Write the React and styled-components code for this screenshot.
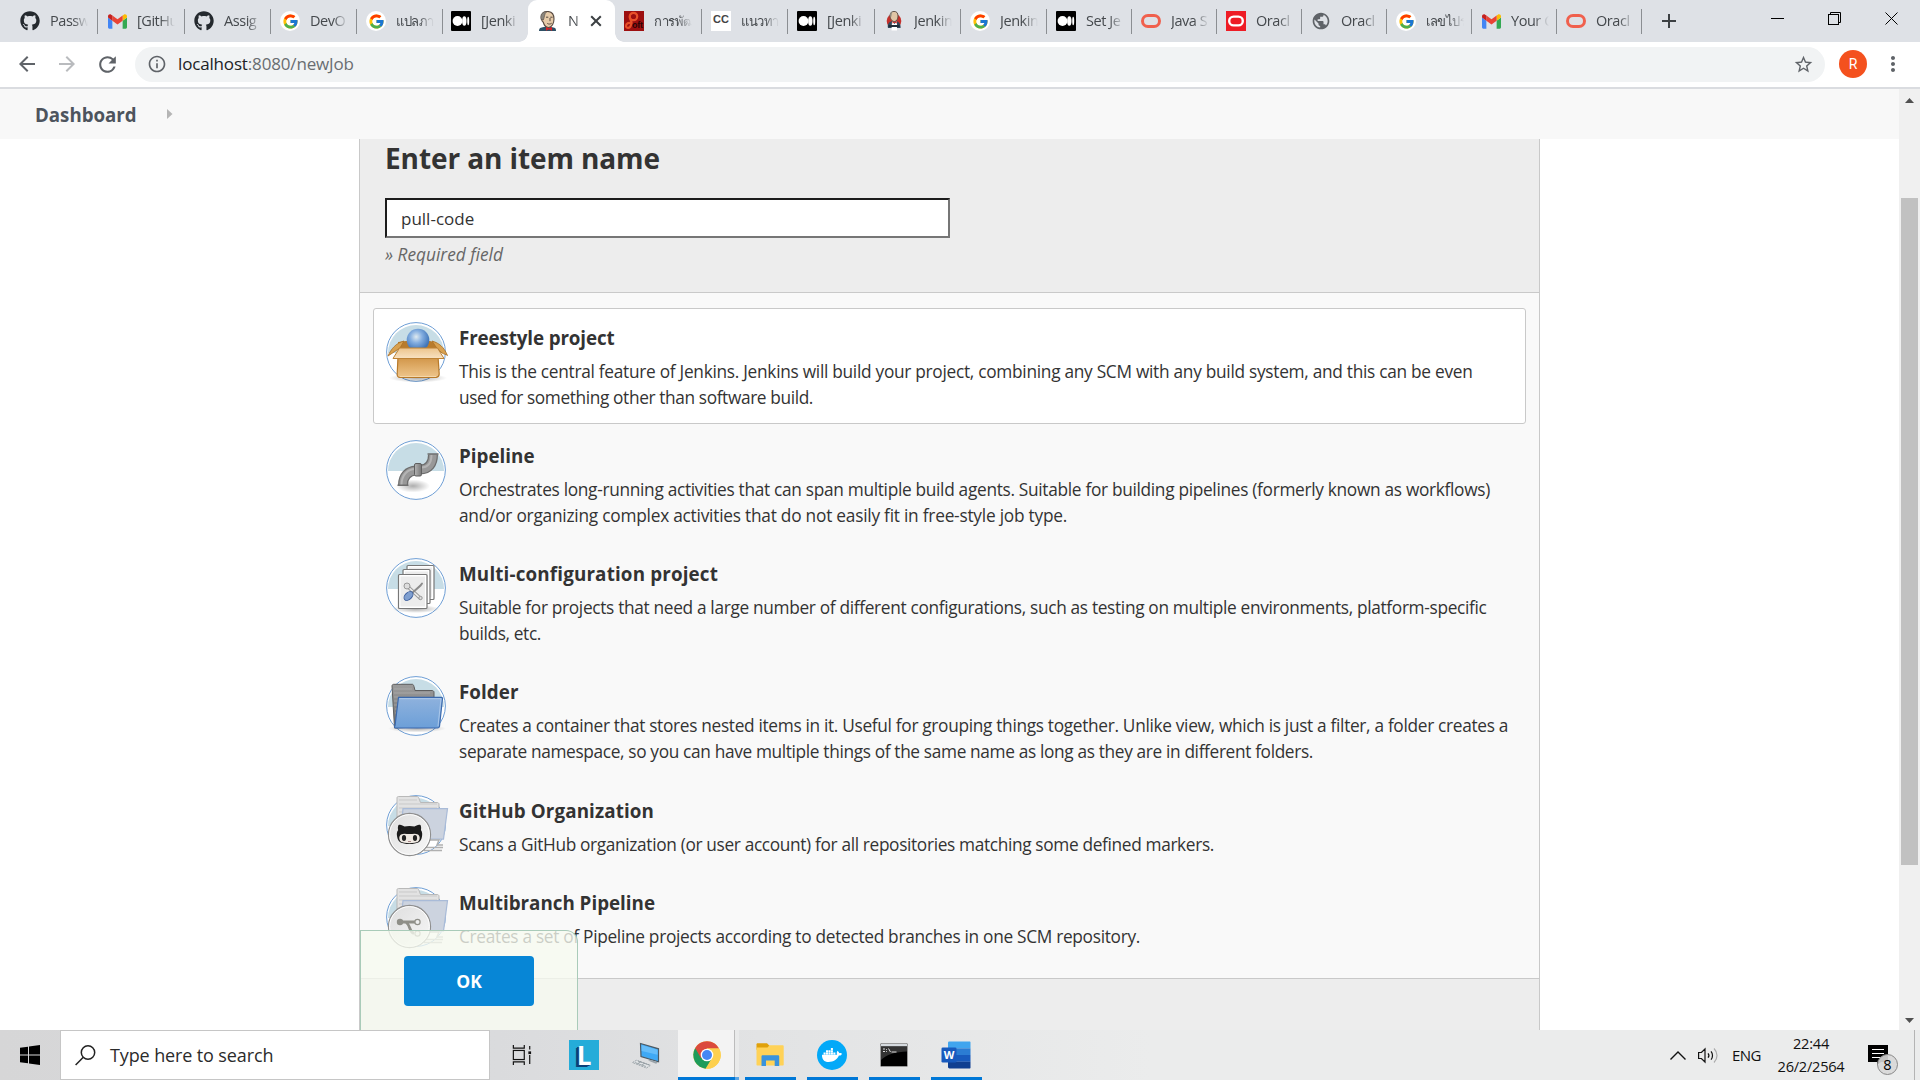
import React from 'react';
import styled, { createGlobalStyle, css } from 'styled-components';
import { FaGithub, FaDocker } from 'react-icons/fa';
import { FcGoogle } from 'react-icons/fc';
import {
  MdArrowBack, MdArrowForward, MdRefresh, MdInfoOutline, MdStarBorder, MdMoreVert, MdPublic,
} from 'react-icons/md';

const FONT = '"Open Sans", "Noto Sans", "Liberation Sans", sans-serif';

const GlobalStyle = createGlobalStyle`
  * { box-sizing: border-box; }
  html, body { margin: 0; height: 100%; overflow: hidden; }
  body { font-family: ${FONT}; color: #333; background: #fff; }
  svg { display: block; flex: none; overflow: visible; }
`;

/* Tracks text so that it fills a given measure. */
const ctx = document.createElement('canvas').getContext('2d');
function tracking(text, font, width) {
  ctx.font = `${font} ${FONT}`;
  return (width - ctx.measureText(text).width) / text.length;
}

const Screen = styled.div`
  width: 1920px;
  height: 1080px;
  display: flex;
  flex-direction: column;
  overflow: hidden;
`;

/* ---------- tab strip ---------- */
const TabStrip = styled.div`
  height: 42px;
  flex: none;
  display: flex;
  background: #dee1e6;
`;
const Tab = styled.div`
  width: ${(p) => p.$w}px;
  height: 42px;
  flex: none;
  display: flex;
  align-items: center;
  padding-left: ${(p) => p.$pad || 9}px;
  gap: 10px;
  background: linear-gradient(#8b8e92, #8b8e92) right 0 top 9px / 1.5px 25px no-repeat;
  ${(p) => p.$plain && css`background: none;`}
`;
const ActiveTab = styled.div`
  position: relative;
  width: 87px;
  height: 42px;
  flex: none;
  display: flex;
  align-items: center;
  gap: 10px;
  padding-left: 10px;
  background: #fff;
  border-radius: 9px 9px 0 0;
  &::before, &::after {
    content: '';
    position: absolute;
    bottom: 0;
    width: 9px;
    height: 9px;
  }
  &::before { left: -9px; background: radial-gradient(circle at 0 0, transparent 8.5px, #fff 9px); }
  &::after { right: -9px; background: radial-gradient(circle at 100% 0, transparent 8.5px, #fff 9px); }
`;
const TabText = styled.span`
  width: ${(p) => p.$w || 38}px;
  flex: none;
  overflow: hidden;
  white-space: nowrap;
  font-size: ${(p) => (p.$thai ? 13 : 14.5)}px;
  line-height: 24px;
  letter-spacing: -0.45px;
  color: #45494d;
  mask-image: linear-gradient(90deg, #000 60%, transparent 100%);
`;
const Fav = styled.span`
  width: 20px;
  height: 20px;
  flex: none;
  display: flex;
  align-items: center;
  justify-content: center;
  overflow: hidden;
  font: 700 11px/16px "Liberation Sans", Arial, sans-serif;
  color: #444;
  background: ${(p) => p.$bg || 'transparent'};
  border-radius: ${(p) => p.$r || 0};
`;
const FavText = styled.span`
  padding-bottom: 4px;
  line-height: 14px;
`;
const CloseBox = styled.span`
  display: flex;
  margin-left: -1px;
`;
const NewTab = styled.div`
  width: 54px;
  display: flex;
  align-items: center;
  justify-content: center;
`;
const WindowButtons = styled.div`
  margin-left: auto;
  height: 37px;
  display: flex;
`;
const WindowButton = styled.div`
  width: 57px;
  display: flex;
  align-items: center;
  justify-content: center;
`;

/* ---------- toolbar ---------- */
const Toolbar = styled.div`
  height: 47px;
  flex: none;
  display: flex;
  align-items: center;
  padding: 0 15px 1px;
  border-bottom: 2px solid #dadce0;
  background: #fff;
  color: #5f6368;
`;
const NavButton = styled.span`
  width: 40px;
  display: flex;
  color: ${(p) => (p.$off ? '#b9bbbe' : '#5f6368')};
`;
const Omnibox = styled.div`
  flex: 1;
  height: 35px;
  display: flex;
  align-items: center;
  padding: 0 11px 0 12px;
  border-radius: 18px;
  background: #f1f3f4;
`;
const Url = styled.span`
  margin: 0 auto 0 11px;
  font-size: 17px;
  line-height: 26px;
  letter-spacing: -0.16px;
  color: #696d71;
  b { font-weight: 400; color: #202124; }
`;
const Avatar = styled.span`
  width: 28px;
  height: 28px;
  margin: 0 14px;
  display: flex;
  align-items: center;
  justify-content: center;
  border-radius: 50%;
  background: #f4511e;
  color: #fff;
  font: 400 14px Roboto, sans-serif;
`;

/* ---------- page ---------- */
const Viewport = styled.div`
  height: 941px;
  flex: none;
  display: flex;
`;
const Page = styled.div`
  flex: 1;
  display: flex;
  flex-direction: column;
  overflow: hidden;
  background: #fff;
`;
const Breadcrumbs = styled.div`
  height: 50px;
  flex: none;
  display: flex;
  align-items: center;
  gap: 30px;
  padding-left: 35px;
  background: #f8f8f8;
  color: #4d545d;
  font-size: 18.7px;
  font-weight: 700;
`;
const Panel = styled.main`
  position: relative;
  width: 1181px;
  flex: 1;
  margin-left: 359px;
  display: flex;
  flex-direction: column;
  border: solid #c9c9c9;
  border-width: 0 1px;
  background: #ededed;
  overflow: hidden;
`;
const NameSection = styled.section`
  height: 154px;
  flex: none;
  padding-left: 25px;
  border-bottom: 1px solid #c9c9c9;
`;
const Heading = styled.h1`
  margin: 0 0 21px;
  font-size: 28px;
  line-height: 38px;
  letter-spacing: -0.1px;
  color: #333;
`;
const NameInput = styled.div`
  width: 565px;
  height: 40px;
  padding-left: 14px;
  border: 2px solid;
  border-color: #1c1c1c #767676 #767676 #1c1c1c;
  background: #fff;
  font-size: 17px;
  line-height: 37px;
  color: #333;
`;
const Hint = styled.p`
  margin: 4px 0 0;
  font-size: 17.3px;
  line-height: 26px;
  font-style: italic;
  letter-spacing: 0;
  color: #666;
`;
const ItemList = styled.section`
  flex: none;
  height: 686px;
  padding: 15px 13px 0;
  display: flex;
  flex-direction: column;
  gap: 2.15px;
  border-bottom: 1px solid #c9c9c9;
  background: #f9f9f9;
`;
const Item = styled.article`
  display: flex;
  gap: 13px;
  padding: 13px 12px;
  border: 1px solid ${(p) => (p.$selected ? '#c9c9c9' : 'transparent')};
  border-radius: 3px;
  background: ${(p) => (p.$selected ? '#fff' : 'transparent')};
`;
const ItemText = styled.div`
  padding-top: 3px;
  margin-bottom: -1px;
`;
const ItemTitle = styled.h2`
  margin: 0 0 8px;
  font-size: 18.8px;
  line-height: 26px;
  white-space: nowrap;
  color: #333;
  letter-spacing: ${(p) => p.$ls}px;
`;
const Line = styled.span`
  display: block;
  height: 26px;
  font-size: 17.3px;
  line-height: 26px;
  white-space: nowrap;
  letter-spacing: ${(p) => p.$ls}px;
`;
const Footer = styled.div`
  position: absolute;
  left: 0;
  bottom: 0;
  width: 218px;
  height: 100px;
  padding: 25px 0 0 43px;
  border: solid #a9cbb9;
  border-width: 1px 1px 0 1px;
  border-top-right-radius: 12px;
  background: rgba(246, 250, 240, 0.78);
`;
const OkButton = styled.div`
  width: 130px;
  height: 50px;
  display: flex;
  align-items: center;
  justify-content: center;
  border-radius: 4px;
  background: #0786d6;
  color: #fff;
  font-size: 17.5px;
  font-weight: 700;
`;
const Scrollbar = styled.div`
  width: 21px;
  flex: none;
  display: flex;
  flex-direction: column;
  align-items: center;
  padding: 9px 0 7px;
  background: #f0f0f0;
`;
const Thumb = styled.div`
  width: 17px;
  height: 667px;
  margin: 95px 0 auto;
  background: #c1c1c1;
`;

/* ---------- taskbar ---------- */
const Taskbar = styled.div`
  height: 50px;
  flex: none;
  display: flex;
  background: linear-gradient(90deg, #d6d6d7 0, #dadbdd 500px, #e2e3e4 760px, #ebecec 1150px);
  color: #111;
`;
const StartButton = styled.div`
  width: 60px;
  display: flex;
  align-items: center;
  justify-content: center;
`;
const SearchBox = styled.div`
  width: 430px;
  margin-right: 1px;
  display: flex;
  align-items: center;
  gap: 14px;
  padding-left: 14px;
  border: 1px solid #c6c6c6;
  background: #fff;
  font-size: 18px;
  letter-spacing: -0.12px;
  color: #2b2b2b;
`;
const TaskButton = styled.div`
  width: 62px;
  display: flex;
  align-items: center;
  justify-content: center;
  ${(p) => p.$open && css`background: linear-gradient(#0078d7, #0078d7) center bottom / 51px 3px no-repeat;`}
  ${(p) => p.$active && css`
    padding-right: 3px;
    background:
      linear-gradient(90deg, #0078d7 57px, #5aa5e4 57px) 1px bottom / 61px 3px no-repeat,
      linear-gradient(90deg, #f3f3f3 56px, #bcbcbc 56px 57px, #e9eaea 57px) 1px top / 61px 100% no-repeat;
  `}
`;
const LTile = styled.span`
  width: 30px;
  height: 30px;
  display: flex;
  align-items: center;
  justify-content: center;
  background: #25acd9;
  color: #fff;
  font: 700 26px/30px "Open Sans", sans-serif;
  text-shadow: -1px 1px 0 #0b3f78, -2px 1px 0 #0b3f78, -3px 2px 0 #0b3f78;
`;
const Tray = styled.div`
  margin-left: auto;
  display: flex;
  align-items: center;
  padding-right: 5px;
`;
const Speaker = styled.span`
  display: flex;
  margin-left: 12px;
`;
const Lang = styled.span`
  width: 30px;
  margin: 0 14px 0 13px;
  font-size: 15px;
  letter-spacing: -0.6px;
`;
const Clock = styled.div`
  width: 70px;
  text-align: center;
  line-height: 22.6px;
  font-size: 14.6px;
  letter-spacing: -0.25px;
`;
const Notifications = styled.div`
  position: relative;
  width: 46px;
  height: 50px;
  margin-left: 22px;
  padding-top: 15px;
`;
const Badge = styled.span`
  position: absolute;
  left: 9px;
  top: 24px;
  width: 21px;
  height: 21px;
  border: 1px solid #888;
  border-radius: 50%;
  background: rgba(216, 216, 216, 0.9);
  text-align: center;
  color: #000;
  font-size: 14.5px;
  line-height: 19px;
`;
const DesktopEdge = styled.div`
  width: 1px;
  height: 50px;
  background: #b4b4b4;
`;

/* ---------- favicons ---------- */
const Gmail = () => (
  <svg width="19" height="15" viewBox="0 0 24 18">
    <path d="M1.600 18H5.500V8L0 4v12.400C0 17.300.7 18 1.600 18z" fill="#4285f4" />
    <path d="M18.500 18h3.900c.9 0 1.600-.7 1.600-1.600V4l-5.500 4z" fill="#34a853" />
    <path d="M18.500 1.500V8L24 4V2.400C24 .4 21.700-.8 20 .4z" fill="#fbbc04" />
    <path d="M5.500 8V1.500L12 6.300l6.500-4.800V8L12 12.800z" fill="#ea4335" />
    <path d="M0 2.400V4l5.500 4V1.500L4 .4C2.300-.8 0 .4 0 2.400z" fill="#c5221f" />
  </svg>
);
const Medium = () => (
  <svg width="20" height="20" viewBox="0 0 20 20">
    <rect width="20" height="20" rx="1" fill="#000" />
    <circle cx="6.500" cy="10" r="4.900" fill="#fff" />
    <ellipse cx="13.300" cy="10" rx="2.200" ry="4.700" fill="#fff" />
    <ellipse cx="17.200" cy="10" rx="1" ry="4.200" fill="#fff" />
  </svg>
);
const Oracle = ({ c = '#f0604d', s = 3, w = 20 }) => (
  <svg width={w} height="14" viewBox="0 0 20 14">
    <rect x={s / 2} y={s / 2} width={20 - s} height={14 - s} rx={(14 - s) / 2} fill="none" stroke={c} strokeWidth={s} />
  </svg>
);
const Butler = () => (
  <svg width="20" height="20" viewBox="0 0 20 20">
    <path d="M1 20c0-3 1.500-3.500 5-4h7c4 .5 5 1 5 4z" fill="#2f5065" />
    <path d="M3.500 7C3 2.500 6 .5 9.500.5c4.500 0 6.500 3 6.500 7.500 0 4-2 8.500-5.500 8.500S6 14 5.200 11C4 11 3.700 9 3.500 7z" fill="#e6cba9" stroke="#56483f" strokeWidth="1.100" />
    <path d="M3 8.500C1.800 3 5 .3 9 .6 6 2.500 7 5.500 5.300 9z" fill="#8a867e" stroke="#56483f" strokeWidth=".6" />
    <path d="M8 6.200h2.300M12.300 6.200h2.300M12 7v3.200M9.300 12.500c1.700.9 3.300.6 4.400-.3" stroke="#56483f" strokeWidth="1" fill="none" />
    <path d="M8 16l3 1.300 3-1.300v3.800L11 18.300 8 19.800z" fill="#d81f26" />
  </svg>
);
const JenkinsLogo = () => (
  <svg width="18" height="20" viewBox="0 0 18 20">
    <circle cx="9" cy="10" r="7.300" fill="#c5302b" />
    <path d="M3 17c-1-4 1-6 4-7h4c3.500 1 5 4 4.500 7z" fill="#33475a" />
    <path d="M7 10l2.500 3 2.500-3v9.500H6.500z" fill="#fff" />
    <path d="M5 5C5 1.500 7 .4 9 .4c2.600 0 4 1.600 4 4.600S11.500 10.500 9.500 10.500 5.500 9 5 5z" fill="#e0c5a5" stroke="#56483f" strokeWidth=".9" />
    <path d="M4.700 5.200C4.600 2 6.500.6 8 .6 6.500 2 6.800 3.500 6.300 5.800z" fill="#8d887e" />
    <path d="M7.500 10.200l2 .9 2.300-.9v2.300l-2.300-.8-2 .8z" fill="#d33833" />
    <path d="M3.500 15h11" stroke="#222d38" strokeWidth="2" />
  </svg>
);
const Soft = () => (
  <svg width="20" height="20" viewBox="0 0 20 20">
    <rect width="20" height="20" fill="#9d0f10" />
    <circle cx="9.500" cy="5.500" r="3.700" fill="none" stroke="#e8502a" strokeWidth="2.200" />
    <path d="M6 4.500C4.500 9 9.500 10 7 14c-1 4-5 3.500-5 1s3-4 4.500-2.500" fill="none" stroke="#e8502a" strokeWidth="2.200" />
    <text x="8" y="17" fontSize="9" fontWeight="700" fontFamily="Liberation Sans" fill="#2a0505" textLength="11">oft</text>
  </svg>
);

/* ---------- item icons ---------- */
const Disc = () => (
  <>
    <circle cx="30" cy="30" r="29.300" fill="#fff" />
    <path d="M2 31a28 28 0 0 1 56 0z" fill="#c7dde6" />
    <circle cx="30" cy="30" r="29.400" fill="none" stroke="#6f9fd6" strokeWidth="1" />
  </>
);
const ItemSvg = ({ children }) => <svg width="60" height="60" viewBox="0 0 60 60">{children}</svg>;
const Gradients = () => (
  <svg width="0" height="0" viewBox="0 0 1 1" aria-hidden="true">
    <defs>
      <radialGradient id="ball" cx=".42" cy=".36" r=".6"><stop offset="0" stopColor="#dfeaf0" /><stop offset=".45" stopColor="#84aee0" /><stop offset="1" stopColor="#3f74b8" /></radialGradient>
      <linearGradient id="box" x1="0" y1="0" x2="0" y2="1"><stop offset="0" stopColor="#cf9243" /><stop offset="1" stopColor="#efc68c" /></linearGradient>
      <linearGradient id="flap" x1="0" y1="0" x2="0" y2="1"><stop offset="0" stopColor="#ecc48c" /><stop offset="1" stopColor="#f8e2c2" /></linearGradient>
      <linearGradient id="pipe" x1="0" y1="0" x2="1" y2="0"><stop offset="0" stopColor="#b5b5b5" /><stop offset="1" stopColor="#757575" /></linearGradient>
      <radialGradient id="shade"><stop offset="0" stopColor="#000" stopOpacity=".32" /><stop offset="1" stopColor="#000" stopOpacity="0" /></radialGradient>
      <linearGradient id="blue" x1="0" y1="0" x2="0" y2="1"><stop offset="0" stopColor="#8fb2dd" /><stop offset="1" stopColor="#6c9fd8" /></linearGradient>
      <linearGradient id="gray" x1="0" y1="0" x2="0" y2="1"><stop offset="0" stopColor="#9c9c9c" /><stop offset="1" stopColor="#6e6e6e" /></linearGradient>
      <linearGradient id="disc" x1="0" y1="0" x2="1" y2="1"><stop offset="0" stopColor="#dedede" /><stop offset="1" stopColor="#f7f7f7" /></linearGradient>
    </defs>
  </svg>
);
const FreestyleIcon = () => (
  <ItemSvg>
    <Disc />
    <ellipse cx="32" cy="56" rx="29" ry="4.500" fill="url(#shade)" />
    <path d="M12 20l8-1h24l7 2v8H12z" fill="#b87b2c" />
    <path d="M18 19l-4 7-12 8c3-7 8-13 16-15zM46 19c7 2 12 6 15.500 14.500-2-1.500-3-1-5.500-2.500l-6-6z" fill="#d9a14f" stroke="#a87027" strokeWidth=".8" />
    <circle cx="32" cy="18" r="11.300" fill="url(#ball)" />
    <path d="M12 34h40l1.200 18c0 2-1 3-3 3.500H14c-2 0-3-1.500-2.800-3.500z" fill="url(#box)" stroke="#b87a2a" strokeWidth="1.200" />
    <path d="M13.500 26h38l6.500 10.500H7z" fill="url(#flap)" stroke="#bd8235" strokeWidth="1" />
    <path d="M14 54.500h36" stroke="#f6dcb3" strokeWidth=".8" />
  </ItemSvg>
);
const PipelineIcon = () => (
  <ItemSvg>
    <Disc />
    <ellipse cx="27" cy="46" rx="17" ry="6.500" fill="url(#shade)" />
    <path d="M17 45c0-9 5-14 13-14.500M34 29.500c9 0 13-6 13-15" fill="none" stroke="#6d6d6d" strokeWidth="10" />
    <path d="M17 45c0-9 5-14 13-14.500M34 29.500c9 0 13-6 13-15" fill="none" stroke="#989898" strokeWidth="7.500" />
    <path d="M15.500 45c0-10 6-16 14-16M35 27.500c7 0 10.500-5 10.500-13" fill="none" stroke="#b4b4b4" strokeWidth="2" />
    <rect x="28.500" y="23.500" width="7" height="12.500" rx="1.500" fill="url(#pipe)" stroke="#5f5f5f" />
    <path d="M11.500 45.300h11M41.500 14h11" stroke="#6f6f6f" strokeWidth="1.500" />
  </ItemSvg>
);
const MultiIcon = () => (
  <ItemSvg>
    <Disc />
    <ellipse cx="30" cy="51" rx="24" ry="4" fill="url(#shade)" />
    {[[21, 7.5, 27, 34], [17, 11.5, 27, 34], [12.5, 16.5, 28.500, 34]].map(([x, y, w, h]) => (
      <g key={x}>
        <rect x={x} y={y} width={w} height={h} rx="1" fill="#fff" stroke="#777" strokeWidth="1.200" />
        <rect x={x + 2} y={y + 2} width={w - 4} height={h - 4} fill="#ececec" />
      </g>
    ))}
    <path d="M20 27l14 13" stroke="#9a9a9a" strokeWidth="3.600" strokeLinecap="round" />
    <path d="M20 27l14 13" stroke="#eee" strokeWidth="1.600" strokeLinecap="round" />
    <circle cx="21" cy="28" r="3" fill="#ddd" stroke="#999" />
    <circle cx="34.500" cy="40" r="1.700" fill="#ddd" stroke="#999" />
    <path d="M25 36l9.500-8.500 1.500-2" stroke="#8c8c8c" strokeWidth="2" strokeLinecap="round" />
    <ellipse cx="22.500" cy="38" rx="5.300" ry="3.400" transform="rotate(-45 22.500 38)" fill="#7f9fd0" stroke="#3d5f9e" />
  </ItemSvg>
);
const FolderIcon = () => (
  <ItemSvg>
    <Disc />
    <ellipse cx="31" cy="52.500" rx="29" ry="4" fill="url(#shade)" />
    <path d="M6 10c0-1 .7-1.700 1.700-1.700h18.500c1 0 1.300.7 1.800 2.200l1 4h17c1 0 2 .7 2 1.700V50l-38 2H8.500z" fill="url(#gray)" stroke="#5e5e5e" />
    <path d="M8 13h18M8 17h36M8 21h5M8 25h5M8 29h4M9 33h3M9 37h3" stroke="#c4c4c4" strokeWidth=".6" opacity=".7" />
    <path d="M12.500 21.300h43c.8 0 1 .4 1 1l-3 28c-.3 1.300-1 1.700-2 1.700H10c-1.500 0-2-.5-1-2.500z" fill="url(#blue)" stroke="#3a69ad" strokeWidth="1.200" />
    <path d="M13.500 22.700h41.500l-3 27.500" fill="none" stroke="#b6cfee" strokeWidth=".8" />
  </ItemSvg>
);
const PaleFolder = () => (
  <>
    <Disc />
    <path d="M11 3c0-1 .5-1.500 1.500-1.500H31c1 0 1.500.6 2 2l1.500 4H51c1 0 2 .6 2 1.600V42H11z" fill="#e2e2e2" stroke="#b9b9b9" />
    <path d="M13 5h18M13 9h38M13 13h38M13 17h38" stroke="#c9c9c9" strokeWidth="1" />
    <path d="M17 13.700h44.500l-4 30.500H14z" fill="#ccd3df" stroke="#a9bbd8" strokeWidth="1.200" />
    <path d="M43 45h10l-2 5h6M40 52.500h17M38 55.500h18" stroke="#b0b0b0" strokeWidth="1.500" fill="none" />
    <circle cx="23.500" cy="39.500" r="21" fill="url(#disc)" stroke="#8f8f8f" strokeWidth="1.300" />
    <circle cx="23.500" cy="39.500" r="19.900" fill="none" stroke="#fff" strokeWidth="1" />
  </>
);
const GithubOrgIcon = () => (
  <ItemSvg>
    <PaleFolder />
    <path d="M12.500 30c2-1 4.500.7 6 1.500 3-.7 7-.7 10 0 1.500-.8 4-2.500 6-1.500.9 2 .7 3.800.4 5 1.500 2 1.500 4 1 7-.8 5-4.500 7-12.400 7S12 47 11.200 42c-.6-3-.6-5 1-7-.4-1.200-.6-3 .3-5z" fill="#1b1b1b" />
    <path d="M15 39.500c2.500-1.500 5-.6 8.500-.6s6-.9 8.500.6c2.500 1.800 2 5.500 0 7.300C29.500 48.600 17.500 48.600 15 46.800c-2-1.800-2.500-5.500 0-7.300z" fill="#efe9e2" />
    <ellipse cx="18" cy="43" rx="2.100" ry="2.900" fill="#222" />
    <ellipse cx="29" cy="43" rx="2.100" ry="2.900" fill="#222" />
    <path d="M22 46.500h3" stroke="#a88" strokeWidth="1" />
  </ItemSvg>
);
const MultibranchIcon = () => (
  <ItemSvg>
    <PaleFolder />
    <path d="M14 35h15M19 35c5 1 4 9 8 11h1" stroke="#8f8f88" strokeWidth="2.800" fill="none" />
    <circle cx="14" cy="35" r="3.200" fill="#8f8f88" />
    <circle cx="31.500" cy="35" r="2.600" fill="#eee" stroke="#8f8f88" strokeWidth="1.200" />
    <circle cx="31.500" cy="46.500" r="2.600" fill="#eee" stroke="#8f8f88" strokeWidth="1.200" />
  </ItemSvg>
);

/* ---------- taskbar icons ---------- */
const Chrome = () => (
  <svg width="28" height="28" viewBox="0 0 48 48">
    <circle cx="24" cy="24" r="23.500" fill="#fdd04e" />
    <path d="M24 24L3.700 12.200A23.500 23.500 0 0 0 21.500 47.400L32 30z" fill="#1e9c5a" />
    <path d="M24 13h20.700A23.500 23.500 0 0 0 3.700 12.100L14 30z" fill="#db4a3c" />
    <path d="M24 13h20.700A23.500 23.500 0 0 1 22.500 47.500L33.500 29z" fill="#fdd04e" />
    <circle cx="24" cy="24" r="10.800" fill="#fff" />
    <circle cx="24" cy="24" r="8.600" fill="#4587f4" />
  </svg>
);
const Explorer = () => (
  <svg width="28" height="24" viewBox="0 0 28 24">
    <path d="M.5 1.500C.5.700 1 .3 1.800.3H11l2.500 2.500v4H.5z" fill="#e0a10a" />
    <path d="M.5 4.500h11l2-2.300h13c.8 0 1.200.5 1.200 1.200v18c0 .8-.4 1.100-1.200 1.100H1.700c-.8 0-1.200-.4-1.200-1.100z" fill="#ffd257" />
    <path d="M5.500 23V13.500c0-.8.5-1.300 1.300-1.300h15c.8 0 1.400.5 1.400 1.300V23h-4.500v-5.500H10V23z" fill="#3a93dc" />
  </svg>
);
const Docker = styled.span`
  width: 30px;
  height: 30px;
  display: flex;
  align-items: center;
  justify-content: center;
  border-radius: 50%;
  background: #03a9f8;
  color: #fff;
`;
const Cmd = () => (
  <svg width="28" height="24" viewBox="0 0 28 24">
    <rect x=".5" y=".5" width="27" height="23" rx="1" fill="#000" stroke="#9a9a9a" />
    <path d="M1 1h26v2.500H1z" fill="#d5dade" />
    <path d="M1 3.500h26v5C16 9 7 11 1 17z" fill="#333" />
    <path d="M3 6h2M3 8.500h2M6.500 6v.8M6.500 8v.8M8.500 5.500l2 3.500M11.500 9h5" stroke="#ddd" strokeWidth="1" />
  </svg>
);
const Word = () => (
  <svg width="30" height="28" viewBox="0 0 30 28">
    <path d="M8.500.5h20c.6 0 1 .4 1 1V7.300H7V1.900C7 1 7.600.5 8.500.5z" fill="#41a5ee" />
    <path d="M7 7.300h22.500V14H7z" fill="#2b7cd3" />
    <path d="M7 14h22.500v6.800H7z" fill="#185abd" />
    <path d="M7 20.800h22.500v5.700c0 .6-.4 1-1 1H8.500c-.9 0-1.500-.5-1.500-1.400z" fill="#103f91" />
    <rect x=".5" y="6.500" width="15" height="15" rx="1.300" fill="#185abd" />
    <text x="8" y="18" textAnchor="middle" fontSize="11" fontWeight="700" fontFamily="Open Sans" fill="#fff">W</text>
  </svg>
);
const Computer = () => (
  <svg width="28" height="27" viewBox="0 0 28 27">
    <path d="M8.500 1.500l18 5.300v13L9 14.500z" fill="#3fa9f5" stroke="#4d5a64" strokeWidth="1.200" />
    <path d="M9.500 3l16 4.700v5L9.700 9z" fill="#66bdf9" />
    <path d="M16 18.500l8 3.300 2-1.300-7-2.500z" fill="#9aa3a9" />
    <path d="M.5 20.500l4-2.200 14 5-4 2.700z" fill="#e2e5e7" stroke="#8a949a" strokeWidth=".8" strokeDasharray="2 .8" />
    <path d="M3 20.500l11 4M6 19l11 4M6 21.500l3-2M10 23l3-2" stroke="#8a949a" strokeWidth=".7" />
  </svg>
);
const TaskView = () => (
  <svg width="22" height="20" viewBox="0 0 22 22" fill="none" stroke="#111" strokeWidth="1.300">
    <path d="M1.500 0v3.500h12V0M1.500 22v-3.500h12V22" />
    <rect x="1.500" y="6" width="12" height="10" />
    <path d="M19.500 1v4M19.500 11v10" />
    <rect x="18" y="7" width="3" height="3" fill="#111" stroke="none" />
  </svg>
);

/* ---------- data ---------- */
const google = <Fav $bg="#fff" $r="50%"><FcGoogle size={17} /></Fav>;
const github = <Fav><FaGithub size={20} color="#24292e" /></Fav>;
const gmail = <Fav><Gmail /></Fav>;
const medium = <Fav><Medium /></Fav>;
const oracle = <Fav><Oracle /></Fav>;

const leftTabs = [
  [github, 'Passw', 98, 20], [gmail, '[GitHu', 87], [github, 'Assig', 86],
  [google, 'DevO', 86], [google, 'แปลภา', 86], [medium, '[Jenki', 85, 8],
];
const rightTabs = [
  [<Fav key="s"><Soft /></Fav>, 'การพัฒ', 87], [<Fav key="c" $bg="#fff"><FavText>CC</FavText></Fav>, 'แนวทา', 86],
  [medium, '[Jenki', 87], [<Fav key="j"><JenkinsLogo /></Fav>, 'Jenkin', 86], [google, 'Jenkin', 86],
  [medium, 'Set Je', 85], [oracle, 'Java S', 85],
  [<Fav key="o" $bg="#ee1c25"><Oracle c="#fff" s={3} w={16} /></Fav>, 'Oracl', 85],
  [<Fav key="g"><MdPublic size={20} color="#5f6368" /></Fav>, 'Oracl', 85], [google, 'เลขไปร', 85],
  [gmail, 'Your C', 85], [oracle, 'Oracl', 85],
];

const items = [
  {
    Icon: FreestyleIcon, title: 'Freestyle project', width: 155.5, selected: true,
    lines: [
      ['This is the central feature of Jenkins. Jenkins will build your project, combining any SCM with any build system, and this can be even', 1013.5],
      ['used for something other than software build.', 354],
    ],
  },
  {
    Icon: PipelineIcon, title: 'Pipeline', width: 75.5,
    lines: [
      ['Orchestrates long-running activities that can span multiple build agents. Suitable for building pipelines (formerly known as workflows)', 1031],
      ['and/or organizing complex activities that do not easily fit in free-style job type.', 608],
    ],
  },
  {
    Icon: MultiIcon, title: 'Multi-configuration project', width: 259,
    lines: [
      ['Suitable for projects that need a large number of different configurations, such as testing on multiple environments, platform-specific', 1027.5],
      ['builds, etc.', 82],
    ],
  },
  {
    Icon: FolderIcon, title: 'Folder', width: 59.5,
    lines: [
      ['Creates a container that stores nested items in it. Useful for grouping things together. Unlike view, which is just a filter, a folder creates a', 1049],
      ['separate namespace, so you can have multiple things of the same name as long as they are in different folders.', 854],
    ],
  },
  {
    Icon: GithubOrgIcon, title: 'GitHub Organization', width: 195,
    lines: [['Scans a GitHub organization (or user account) for all repositories matching some defined markers.', 755]],
  },
  {
    Icon: MultibranchIcon, title: 'Multibranch Pipeline', width: 196,
    lines: [['Creates a set of Pipeline projects according to detected branches in one SCM repository.', 681]],
  },
];

const isThai = (text) => /[\u0e00-\u0e7f]/.test(text);

const renderTab = ([icon, text, w, pad], i, all) => (
  <Tab key={i} $w={w} $pad={pad} $plain={all === leftTabs && i === all.length - 1}>
    {icon}
    <TabText $thai={isThai(text)}>{text}</TabText>
  </Tab>
);

export default function App() {
  return (
    <Screen>
      <GlobalStyle />
      <TabStrip>
        {leftTabs.map(renderTab)}
        <ActiveTab>
          <Fav><Butler /></Fav>
          <TabText $w={13}>N</TabText>
          <CloseBox>
            <svg width="12" height="12" viewBox="0 0 12 12"><path d="M1.200 1.200l9.600 9.600M10.800 1.200l-9.600 9.600" stroke="#3c4043" strokeWidth="2" /></svg>
          </CloseBox>
        </ActiveTab>
        {rightTabs.map(renderTab)}
        <NewTab><svg width="14" height="14" viewBox="0 0 14 14"><path d="M7 0v14M0 7h14" stroke="#3c4043" strokeWidth="2" /></svg></NewTab>
        <WindowButtons>
          <WindowButton><svg width="13" height="2"><path d="M0 .5h13" stroke="#000" /></svg></WindowButton>
          <WindowButton>
            <svg width="13" height="13" fill="none" stroke="#000"><rect x=".5" y="2.500" width="10" height="10" /><path d="M2.500 2.500v-2h10v10h-2" /></svg>
          </WindowButton>
          <WindowButton><svg width="13" height="13"><path d="M.5.500l12 12M12.500.5l-12 12" stroke="#000" /></svg></WindowButton>
        </WindowButtons>
      </TabStrip>

      <Toolbar>
        <NavButton><MdArrowBack size={24} /></NavButton>
        <NavButton $off><MdArrowForward size={24} /></NavButton>
        <NavButton><MdRefresh size={25} /></NavButton>
        <Omnibox>
          <MdInfoOutline size={20} />
          <Url><b>localhost</b>:8080/newJob</Url>
          <MdStarBorder size={21} />
        </Omnibox>
        <Avatar>R</Avatar>
        <MdMoreVert size={24} />
      </Toolbar>

      <Viewport>
        <Page>
          <Breadcrumbs>
            Dashboard
            <svg width="6" height="10"><path d="M0 0l5.500 5L0 10z" fill="#b5b5b5" /></svg>
          </Breadcrumbs>
          <Panel>
            <NameSection>
              <Heading>Enter an item name</Heading>
              <NameInput>pull-code</NameInput>
              <Hint>» Required field</Hint>
            </NameSection>
            <ItemList>
              {items.map(({ Icon, title, width, lines, selected }) => (
                <Item key={title} $selected={selected}>
                  <Icon />
                  <ItemText>
                    <ItemTitle $ls={tracking(title, '700 18.8px', width)}>{title}</ItemTitle>
                    {lines.map(([text, w]) => (
                      <Line key={text} $ls={tracking(text, '400 17.3px', w)}>{text}</Line>
                    ))}
                  </ItemText>
                </Item>
              ))}
            </ItemList>
            <Footer><OkButton>OK</OkButton></Footer>
          </Panel>
        </Page>
        <Scrollbar>
          <svg width="9" height="5"><path d="M4.500 0L9 5H0z" fill="#505050" /></svg>
          <Thumb />
          <svg width="9" height="5"><path d="M4.500 5L9 0H0z" fill="#505050" /></svg>
        </Scrollbar>
      </Viewport>

      <Taskbar>
        <StartButton>
          <svg width="20" height="20" viewBox="0 0 20 20"><path d="M0 2.800l8-1.100v7.800H0zM9 1.600L20 0v9.500H9zM0 10.500h8v7.800l-8-1.100zM9 10.500h11V20L9 18.400z" fill="#000" /></svg>
        </StartButton>
        <SearchBox>
          <svg width="21" height="21" viewBox="0 0 21 21" fill="none" stroke="#222" strokeWidth="1.500"><circle cx="13" cy="7.500" r="6.700" /><path d="M8.300 12.200L.6 20" /></svg>
          Type here to search
        </SearchBox>
        <TaskButton><TaskView /></TaskButton>
        <TaskButton><LTile>L</LTile></TaskButton>
        <TaskButton><Computer /></TaskButton>
        <TaskButton $active><Chrome /></TaskButton>
        <TaskButton $open><Explorer /></TaskButton>
        <TaskButton $open><Docker><FaDocker size={20} /></Docker></TaskButton>
        <TaskButton $open><Cmd /></TaskButton>
        <TaskButton $open><Word /></TaskButton>
        <Tray>
          <svg width="16" height="9" fill="none" stroke="#111" strokeWidth="1.400"><path d="M.5 8.500L8 1l7.500 7.500" /></svg>
          <Speaker>
            <svg width="21" height="17" viewBox="0 0 21 17" fill="none" stroke="#111" strokeWidth="1.200">
              <path d="M.6 5.500h2.800L7 2v13l-3.600-3.500H.6zM10 6.300c1 1.200 1 3.200 0 4.400M13 4.300c2 2.200 2 6.200 0 8.400" />
              <path d="M16 1.500c4 4 4 10 0 14" stroke="#aaa" />
            </svg>
          </Speaker>
          <Lang>ENG</Lang>
          <Clock>22:44<br />26/2/2564</Clock>
          <Notifications>
            <svg width="20" height="20" viewBox="0 0 20 20">
              <path d="M0 0h20v17h-7l-4 3v-3H0z" fill="#000" />
              <path d="M4 4.500h12M4 8.500h12M4 12.500h9" stroke="#fff" strokeWidth="1.200" />
            </svg>
            <Badge>8</Badge>
          </Notifications>
          <DesktopEdge />
        </Tray>
      </Taskbar>
      <Gradients />
    </Screen>
  );
}
